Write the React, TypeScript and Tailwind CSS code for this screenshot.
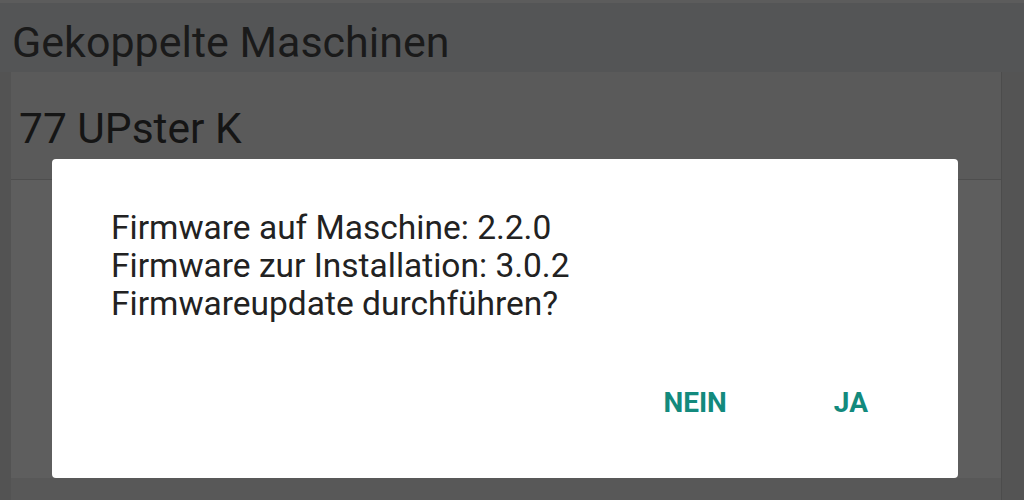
export default function App() {
  return (
    <div
      className="relative h-[500px] w-full overflow-hidden bg-[#545556] flex flex-col"
      style={{ fontFamily: "Roboto, 'Noto Sans', sans-serif" }}
    >
      <div className="h-[3px] bg-[#5c5c5c]" />
      <div className="h-[69px] pl-3 flex items-center">
        <h1 className="text-[43px] leading-none text-[#1a1a1a] mt-[10px]">Gekoppelte Maschinen</h1>
      </div>
      <div className="flex flex-1">
        <div className="w-[11px] bg-[#535353]" />
        <div className="flex-1 flex flex-col">
          <div className="h-[108px] bg-[#5a5a5a] border-b border-[#4e4e4e] pl-[8px] flex items-center">
            <span className="text-[42.5px] leading-none text-[#151515] mt-[8px]">77 UPster K</span>
          </div>
          <div className="flex-1 bg-[#5e5e5e]" />
          <div className="h-[22px] bg-[#585858]" />
        </div>
        <div className="w-[23px] bg-[#545454] border-l border-[#4c4c4c]" />
      </div>

      <div className="absolute left-[52px] top-[159px] w-[906px] h-[319px] bg-white rounded-[4px] flex flex-col">
        <div className="pt-[50px] pl-[59px] text-[33.5px] leading-[38px] text-[#222222]">
          <p>Firmware auf Maschine: 2.2.0</p>
          <p>Firmware zur Installation: 3.0.2</p>
          <p>Firmwareupdate durchführen?</p>
        </div>
        <div className="mt-[66px] flex justify-end gap-[107px] pr-[90px]">
          <button className="text-[28px] leading-[28px] font-bold text-[#138a7d]">NEIN</button>
          <button className="text-[28px] leading-[28px] font-bold text-[#138a7d]">JA</button>
        </div>
      </div>
    </div>
  );
}
